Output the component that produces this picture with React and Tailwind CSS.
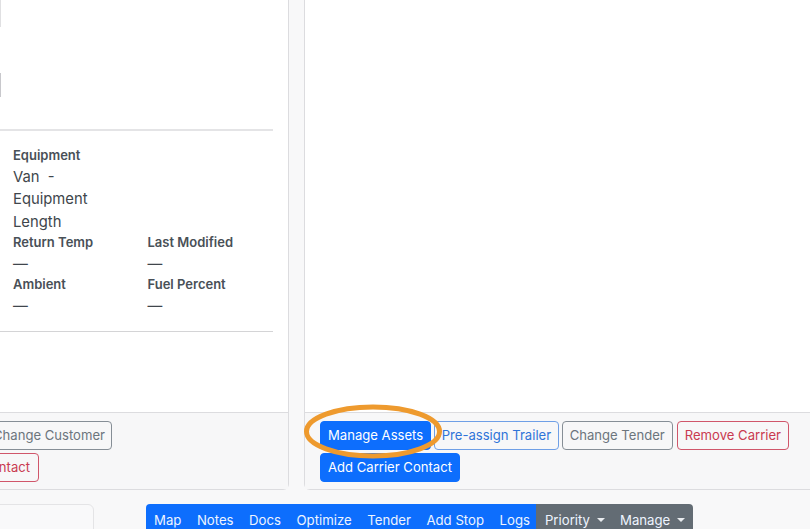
const font = { fontFamily: 'Inter, "Liberation Sans", sans-serif' };

const btn = "h-[29px] shrink-0 rounded-[4px] border px-[7px] text-[13.1px] leading-none whitespace-nowrap flex items-center";

function Field({ label, value }) {
  return (
    <div className="min-w-0">
      <div className="text-[13px] font-semibold leading-[19.5px] text-[#495057]">{label}</div>
      <div className="text-[14.8px] leading-[22.5px] text-[#40464c]">{value}</div>
    </div>
  );
}

function Caret() {
  return <span className="ml-[7px] inline-block h-0 w-0 border-x-[4px] border-t-[4px] border-x-transparent border-t-[#e9ecef]" />;
}

export default function App() {
  return (
    <div style={font} className="relative flex h-[529px] w-[810px] flex-col overflow-hidden bg-[#f8f8f9]">
      <div className="flex h-[490px] shrink-0 gap-[15px]">
        <section className="ml-[-300px] flex w-[589px] shrink-0 flex-col rounded-b-[6px] border border-t-0 border-[#dcdcdf] bg-white">
          <div className="flex h-[412px] flex-col pr-[15px] pl-[312px]">
            <div className="h-[129px]" />
            <div className="ml-[-312px] h-[2px] bg-[#e4e4e6]" />
            <div className="pt-[15px]">
              <div className="w-[90px]">
                <Field label="Equipment" value={<>Van&nbsp; - Equipment Length</>} />
              </div>
              <div className="grid grid-cols-[134.5px_1fr]">
                <Field label="Return Temp" value="—" />
                <Field label="Last Modified" value="—" />
                <Field label="Ambient" value="—" />
                <Field label="Fuel Percent" value="—" />
              </div>
            </div>
            <div className="mt-[14px] ml-[-312px] h-px bg-[#d4d4d6]" />
          </div>
          <footer className="flex h-[77px] flex-col items-end border-t border-[#dcdcdf] bg-[#f7f7f8] pt-[8px] pr-[176px]">
            <div className="flex flex-col items-start gap-[3px]">
              <button className="h-[29px] w-[120px] rounded-[4px] border border-[#868e96] pr-[8.5px] text-right text-[13.1px] whitespace-nowrap text-[#6c757d]">Change Customer</button>
              <button className="h-[29px] w-[47px] overflow-hidden rounded-[4px] border border-[#d0566a] pr-[8px] text-right text-[13.1px] whitespace-nowrap text-[#c93a50]">ntact</button>
            </div>
          </footer>
        </section>

        <section className="flex w-[560px] shrink-0 flex-col rounded-bl-[6px] border border-t-0 border-[#dcdcdf] bg-white">
          <div className="h-[412px]" />
          <footer className="flex h-[77px] flex-col gap-[3px] border-t border-[#dcdcdf] bg-[#f7f7f8] px-[15px] pt-[8px]">
            <div className="flex gap-[2.5px]">
              <button className={`${btn} border-[#0d6efd] bg-[#0d6efd] text-white`}>Manage Assets</button>
              <button className={`${btn} border-[#6f9fe6] text-[#2f74d8]`}>Pre-assign Trailer</button>
              <button className={`${btn} border-[#868e96] text-[#6c757d]`}>Change Tender</button>
              <button className={`${btn} ml-[1.5px] border-[#d0566a] text-[#c93a50]`}>Remove Carrier</button>
            </div>
            <div className="flex">
              <button className={`${btn} border-[#0d6efd] bg-[#0d6efd] text-white`}>Add Carrier Contact</button>
            </div>
          </footer>
        </section>
      </div>

      <div className="mt-[14px] flex items-start">
        <div className="ml-[-20px] h-[40px] w-[114px] shrink-0 rounded-t-[6px] border border-[#e4e4e6] bg-[#f9f9fa]" />
        <nav className="ml-[52px] flex h-[40px] shrink-0 overflow-hidden rounded-t-[4px] text-[13.2px] text-[#eef4ff]">
          <div className="flex gap-[15.5px] bg-[#0d6efd] pt-[8px] pr-[6.5px] pl-[8px] leading-[16px]">
            <span>Map</span><span>Notes</span><span>Docs</span><span>Optimize</span><span>Tender</span><span>Add Stop</span><span>Logs</span>
          </div>
          <div className="flex gap-[15px] bg-[#636c74] pt-[8px] pr-[8px] pl-[8.5px] leading-[16px]">
            <span className="flex h-[16px] items-center">Priority<Caret /></span>
            <span className="flex h-[16px] items-center">Manage<Caret /></span>
          </div>
        </nav>
      </div>

      <span className="absolute top-0 left-0 h-[27px] w-px bg-[#e0e0e2]" />
      <span className="absolute top-[73px] left-0 h-[24px] w-px bg-[#c8c8cc]" />

      <svg className="absolute top-[400px] left-[298px]" width="150" height="70" viewBox="0 0 150 70" fill="none">
        <ellipse cx="75" cy="31.5" rx="66.5" ry="24.5" stroke="#ee9a2e" strokeWidth="5" />
      </svg>
    </div>
  );
}
